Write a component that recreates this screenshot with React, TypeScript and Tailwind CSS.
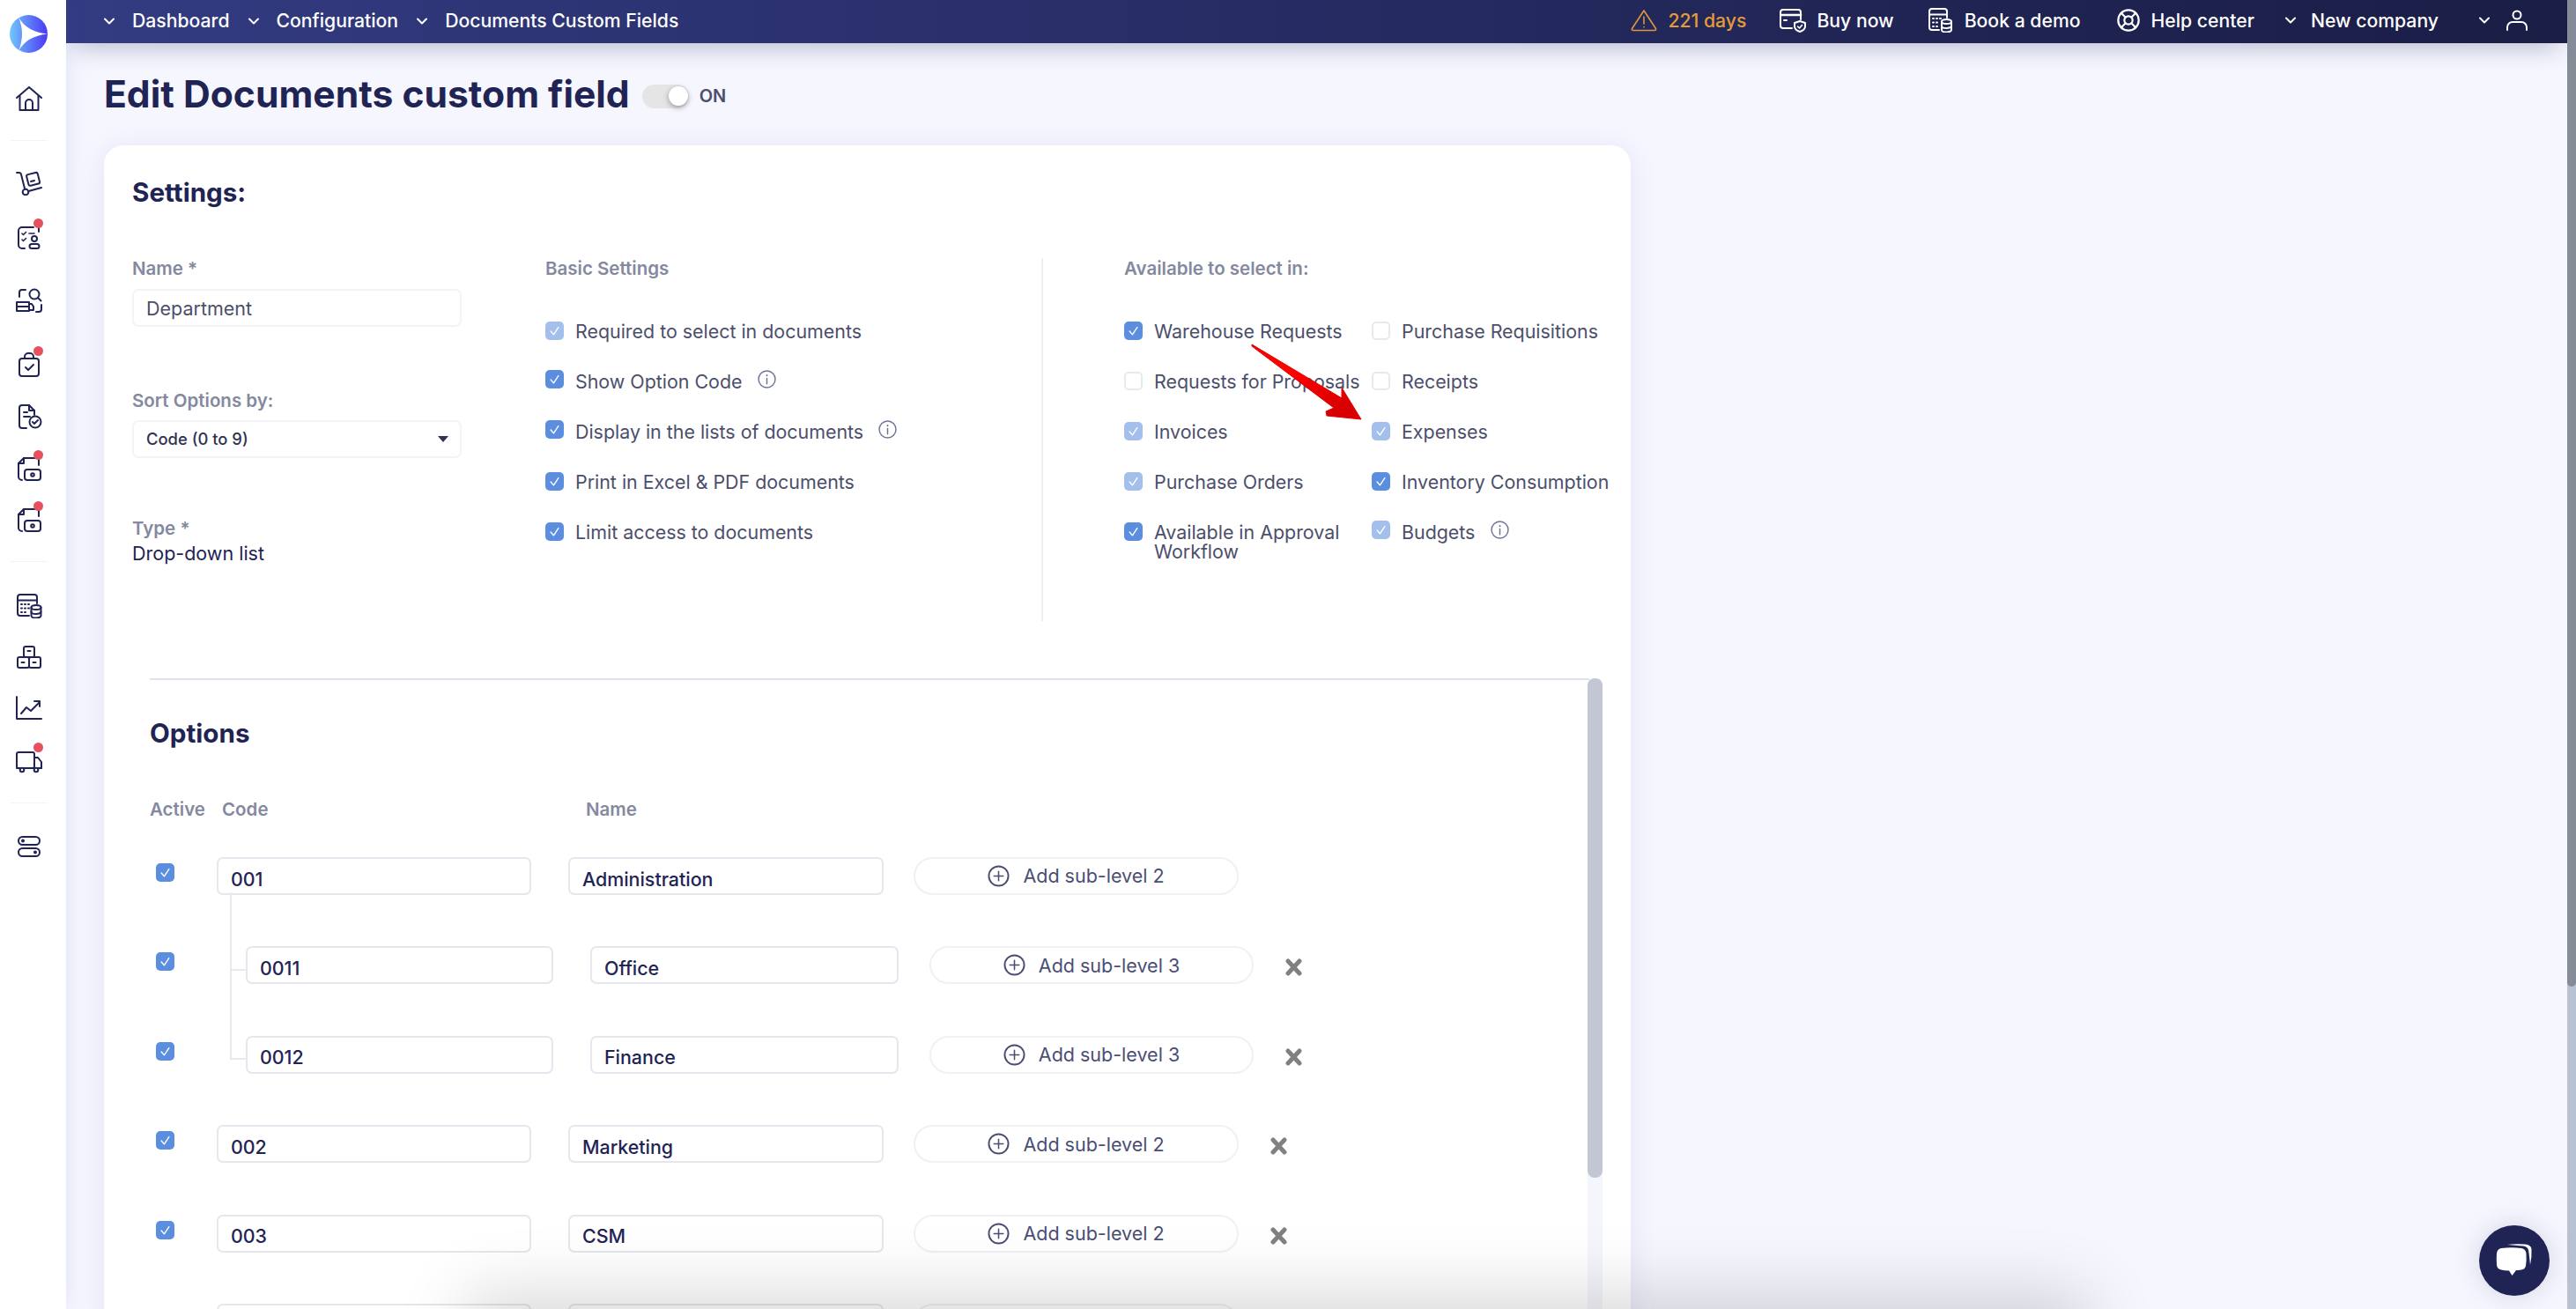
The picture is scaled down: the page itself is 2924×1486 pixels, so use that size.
import React from "react";
import { LifeBuoy } from "lucide-react";

const S = { fill: "none", stroke: "currentColor", strokeWidth: 2, strokeLinecap: "round", strokeLinejoin: "round" } as const;

function Ico({ children }: { children: React.ReactNode }) {
  return (
    <svg viewBox="0 0 30 28" className="h-[28px] w-[30px] text-[#1f2454]" {...S}>
      {children}
    </svg>
  );
}

function Slot({ mt, badge, children }: { mt: string; badge?: boolean; children: React.ReactNode }) {
  return (
    <div className={`relative h-[28px] w-[30px] shrink-0 ${mt}`}>
      {children}
      {badge && <span className="absolute -top-[7px] right-[-1px] h-[11px] w-[11px] rounded-full bg-[#e5525f]" />}
    </div>
  );
}

function SideDivider({ mt }: { mt: string }) {
  return <div className={`h-px w-[43px] shrink-0 bg-[#f3f3f7] ${mt}`} />;
}

const DocMoney = () => (
  <Ico>
    <path d="M26 2H9L3 8V23a4 4 0 0 0 4 4" />
    <path d="M9 2V8H3" />
    <path d="M26 2V10" />
    <rect x="10" y="15" width="18" height="12" rx="3" />
    <circle cx="19" cy="21" r="1.8" />
  </Ico>
);

function Sidebar() {
  return (
    <aside className="z-20 flex w-[75px] shrink-0 flex-col items-center bg-white pr-[10px] shadow-[0_0_24px_rgba(70,80,180,0.12)]">
      <svg viewBox="0 0 43 43" className="mt-[17px] h-[43px] w-[43px] shrink-0">
        <defs>
          <linearGradient id="lg" x1="0" y1="0" x2="1" y2="0">
            <stop offset="0" stopColor="#72c6fb" />
            <stop offset="1" stopColor="#4a38f5" />
          </linearGradient>
        </defs>
        <circle cx="21.5" cy="21.5" r="21.5" fill="url(#lg)" />
        <path d="M10 2.5Q19 19 43 21.5Q19 24 10 41Q18 21.5 10 2.5Z" fill="#fff" />
      </svg>
      <Slot mt="mt-[38px]">
        <Ico>
          <path d="M1 13L15 1L29 13" />
          <path d="M4.5 11V27H25.5V11" />
          <path d="M11 27V19a4 4 0 0 1 8 0V27" />
        </Ico>
      </Slot>
      <SideDivider mt="mt-[33px]" />
      <Slot mt="mt-[34px]">
        <Ico>
          <path d="M1 2H3.5Q5.5 2 6 4L10 20" />
          <circle cx="11" cy="24" r="3.3" />
          <path d="M14.5 23L29 19" />
          <rect x="13" y="3" width="13" height="13" rx="2" transform="rotate(-14 19 9)" />
          <path d="M17 12l4-1" />
        </Ico>
      </Slot>
      <Slot mt="mt-[33px]" badge>
        <Ico>
          <path d="M20 3H7a4 4 0 0 0-4 4V23a4 4 0 0 0 4 4H10" />
          <path d="M26 3V8" />
          <path d="M7 10l1.5 1.5l3-3" strokeWidth="1.6" />
          <path d="M15 10h6" strokeWidth="1.6" />
          <path d="M7 17l1.5 1.5l3-3" strokeWidth="1.6" />
          <circle cx="21" cy="16" r="3" />
          <rect x="15.5" y="22" width="11" height="5" rx="2.5" />
        </Ico>
      </Slot>
      <Slot mt="mt-[44px]">
        <Ico>
          <circle cx="21" cy="7" r="5.5" />
          <path d="M25 11l3.5 3.5" />
          <path d="M11 2H7a3 3 0 0 0-3 3v5" />
          <path d="M29 19v5a3 3 0 0 1-3 3h-3" />
          <path d="M1 16h14v10H1Z" />
          <path d="M1 21h14" />
          <path d="M15 18h3l2 3v4h-5" />
        </Ico>
      </Slot>
      <Slot mt="mt-[45px]" badge>
        <Ico>
          <rect x="4" y="7" width="22" height="20" rx="3" />
          <path d="M10 7V5a4 4 0 0 1 4-4h2a4 4 0 0 1 4 4v2" />
          <path d="M11 17l3 3l6-6" />
        </Ico>
      </Slot>
      <Slot mt="mt-[31px]">
        <Ico>
          <path d="M21 12V7l-6-6H7a3 3 0 0 0-3 3V24a3 3 0 0 0 3 3h5" />
          <path d="M15 1v6h6" />
          <path d="M9 9h4" />
          <path d="M9 14h7" />
          <circle cx="22" cy="20" r="6.5" />
          <path d="M19 20l2 2l4-4" />
        </Ico>
      </Slot>
      <Slot mt="mt-[31px]" badge>
        <DocMoney />
      </Slot>
      <Slot mt="mt-[30px]" badge>
        <DocMoney />
      </Slot>
      <SideDivider mt="mt-[33px]" />
      <Slot mt="mt-[36px]">
        <Ico>
          <path d="M15 25H5a3 3 0 0 1-3-3V4a3 3 0 0 1 3-3h16a3 3 0 0 1 3 3V11" />
          <path d="M2 7.5h22" />
          <path d="M6 12h1M10 12h1M14 12h1M6 16.5h1M10 16.5h1M14 16.5h1M6 21h1M10 21h1" />
          <ellipse cx="23" cy="15.5" rx="5.5" ry="2.5" />
          <path d="M17.5 15.5V25a5.5 2.5 0 0 0 11 0V15.5" />
          <path d="M17.5 20.5a5.5 2.5 0 0 0 11 0" />
        </Ico>
      </Slot>
      <Slot mt="mt-[30px]">
        <Ico>
          <rect x="9" y="2" width="12" height="12" rx="2" />
          <rect x="2" y="14" width="13" height="12" rx="2" />
          <rect x="15" y="14" width="13" height="12" rx="2" />
          <path d="M13.5 7h3M6.5 20h3M19.5 20h3" />
        </Ico>
      </Slot>
      <Slot mt="mt-[30px]">
        <Ico>
          <path d="M1 1V26H29" />
          <path d="M6 20L12 13L17 17L27 7" />
          <path d="M21 6H27V12" />
        </Ico>
      </Slot>
      <Slot mt="mt-[32px]" badge>
        <Ico>
          <rect x="1" y="4" width="20" height="18" rx="2" />
          <path d="M21 10h4l4 5v7h-8" />
          <path d="M1 22h28" />
          <circle cx="7" cy="24" r="2.3" fill="#fff" />
          <circle cx="23" cy="24" r="2.3" fill="#fff" />
        </Ico>
      </Slot>
      <SideDivider mt="mt-[33px]" />
      <Slot mt="mt-[35px]">
        <Ico>
          <rect x="3" y="3" width="24" height="9" rx="4.5" />
          <circle cx="8" cy="7.5" r="1" />
          <rect x="3" y="16" width="24" height="9" rx="4.5" />
          <circle cx="22" cy="20.5" r="1" />
        </Ico>
      </Slot>
    </aside>
  );
}

function Chevron({ ml }: { ml: string }) {
  return (
    <svg viewBox="0 0 12 8" className={`h-[8px] w-[12px] shrink-0 text-white ${ml}`} {...S}>
      <path d="M1 1.5L6 6.5L11 1.5" />
    </svg>
  );
}

function Header() {
  return (
    <header className="z-10 flex h-[49px] w-full shrink-0 items-center bg-gradient-to-r from-[#333b82] to-[#1a1d45] pb-[2px] text-[21.2px] font-medium text-white shadow-[0_14px_28px_-10px_rgba(30,36,90,0.3)]">
      <Chevron ml="ml-[43px]" />
      <span className="ml-[20px]">Dashboard</span>
      <Chevron ml="ml-[21px]" />
      <span className="ml-[20px]">Configuration</span>
      <Chevron ml="ml-[21px]" />
      <span className="ml-[20px]">Documents Custom Fields</span>
      <div className="ml-auto flex items-center">
        <svg viewBox="0 0 30 26" className="h-[26px] w-[30px] text-[#e0963a]" {...S} strokeWidth="1.6">
          <path d="M15 2L28.5 22.5Q29 24.5 27 24.5H3Q1 24.5 1.5 22.5Z" />
          <path d="M15 9v8" />
          <path d="M15 20.5v.3" />
        </svg>
        <span className="ml-[12px] text-[#e59a38]">221 days</span>
        <svg viewBox="0 0 30 27" className="ml-[38px] h-[27px] w-[30px]" {...S}>
          <path d="M14 22H4a3 3 0 0 1-3-3V4a3 3 0 0 1 3-3h17a3 3 0 0 1 3 3v8" />
          <path d="M1 7h23" strokeWidth="2.6" />
          <path d="M5 13h3" />
          <path d="M23 14l6 2v4q0 4-6 6q-6-2-6-6v-4Z" />
          <path d="M20.5 20l2 2l3-3.5" strokeWidth="1.6" />
        </svg>
        <span className="ml-[12px]">Buy now</span>
        <svg viewBox="0 0 28 28" className="ml-[39px] h-[28px] w-[28px]" {...S}>
          <path d="M12 25H4a3 3 0 0 1-3-3V4a3 3 0 0 1 3-3h14a3 3 0 0 1 3 3V11" />
          <path d="M1 7.5h20" />
          <path d="M5 12h1M9 12h1M13 12h1M5 16.5h1M9 16.5h1M5 21h1M9 21h1" />
          <ellipse cx="20.5" cy="15.5" rx="5.5" ry="2.5" />
          <path d="M15 15.5V25a5.5 2.5 0 0 0 11 0V15.5" />
          <path d="M15 20.5a5.5 2.5 0 0 0 11 0" />
        </svg>
        <span className="ml-[13px]">Book a demo</span>
        <LifeBuoy className="ml-[40px] h-[28px] w-[28px]" strokeWidth={1.9} />
        <span className="ml-[12px]">Help center</span>
        <Chevron ml="ml-[35px]" />
        <span className="ml-[17px]">New company</span>
        <Chevron ml="ml-[46px]" />
        <svg viewBox="0 0 24 24" className="ml-[19px] mr-[45px] h-[24px] w-[24px]" {...S}>
          <circle cx="12" cy="6" r="4.5" />
          <path d="M1 23V20a6 6 0 0 1 6-6h10a6 6 0 0 1 6 6v3" />
        </svg>
      </div>
    </header>
  );
}

type CheckState = "on" | "dim" | "off";

function Box({ state, nudge = false }: { state: CheckState; nudge?: boolean }) {
  const cls =
    state === "on"
      ? "bg-[#5b8ede]"
      : state === "dim"
        ? "bg-[#a3bfec]"
        : "border-2 border-[#e8e9f0] bg-white";
  return (
    <span className={`flex h-[21px] w-[21px] shrink-0 items-center justify-center rounded-[5px] ${cls} ${nudge ? "-mt-[2px]" : ""}`}>
      {state !== "off" && (
        <svg viewBox="0 0 12 12" className="h-[13px] w-[13px] text-white" fill="none" stroke="currentColor" strokeWidth="1.3" strokeLinecap="round" strokeLinejoin="round">
          <path d="M2 6.5L5 10L10 2.5" />
        </svg>
      )}
    </span>
  );
}

function Info({ ml }: { ml: string }) {
  return (
    <svg viewBox="0 0 20 20" className={`-mt-[2px] h-[21px] w-[21px] shrink-0 text-[#6f7598] ${ml}`} fill="none" stroke="currentColor" strokeWidth="1.4" strokeLinecap="round">
      <circle cx="10" cy="10" r="9" />
      <path d="M10 9v6" />
      <path d="M10 5.6v.3" strokeWidth="1.8" />
    </svg>
  );
}

function CheckRow({ state, label, infoMl }: { state: CheckState; label: React.ReactNode; infoMl?: string }) {
  return (
    <div className="flex h-[57px] items-start text-[21.4px] leading-[22px] text-[#4c4f6b]">
      <Box state={state} nudge={!!infoMl} />
      <span className="ml-[13px]">{label}</span>
      {infoMl && <Info ml={infoMl} />}
    </div>
  );
}

const labelCls = "h-[24px] text-[20.5px] font-semibold leading-[24px] text-[#8489a0]";

function Settings() {
  return (
    <section className="h-[605px] shrink-0 pl-[32px] pt-[36px]">
      <h2 className="h-[34px] text-[29.6px] font-bold leading-[34px] text-[#1f2454]">Settings:</h2>
      <div className="mt-[58px] flex">
        <div className="w-[374px] shrink-0">
          <div className={labelCls}>Name *</div>
          <input
            readOnly
            value="Department"
            className="mt-[11px] block h-[43px] w-full rounded-[7px] border-2 border-[#f3f3fa] bg-white pl-[14px] text-[21.5px] text-[#4c4f6b] outline-none"
          />
          <div className={`mt-[72px] ${labelCls}`}>Sort Options by:</div>
          <div className="mt-[10px] flex h-[43px] items-center justify-between rounded-[7px] border-2 border-[#f3f3fa] bg-white pl-[14px] pr-[13px] text-[18.4px] font-medium text-[#2f3250]">
            <span>Code (0 to 9)</span>
            <span className="h-0 w-0 border-x-[6.5px] border-t-[7px] border-x-transparent border-t-[#2f3250]" />
          </div>
          <div className={`mt-[68px] ${labelCls}`}>Type *</div>
          <div className="mt-[4px] h-[24px] text-[21.5px] leading-[24px] text-[#1f2454]">Drop-down list</div>
        </div>
        <div className="ml-[95px] w-[563px] shrink-0">
          <div className={labelCls}>Basic Settings</div>
          <div className="mt-[48px]">
            <CheckRow state="dim" label="Required to select in documents" />
            <CheckRow state="on" label="Show Option Code" infoMl="ml-[18px]" />
            <CheckRow state="on" label="Display in the lists of documents" infoMl="ml-[17px]" />
            <CheckRow state="on" label="Print in Excel & PDF documents" />
            <CheckRow state="on" label="Limit access to documents" />
          </div>
        </div>
        <div className="h-[412px] w-[2px] shrink-0 bg-[#eeeef4]" />
        <div className="ml-[92px]">
          <div className={labelCls}>Available to select in:</div>
          <div className="mt-[48px] grid grid-cols-[281px_auto]">
            <CheckRow state="on" label="Warehouse Requests" />
            <CheckRow state="off" label="Purchase Requisitions" />
            <CheckRow state="off" label="Requests for Proposals" />
            <CheckRow state="off" label="Receipts" />
            <CheckRow state="dim" label="Invoices" />
            <CheckRow state="dim" label="Expenses" />
            <CheckRow state="dim" label="Purchase Orders" />
            <CheckRow state="on" label="Inventory Consumption" />
            <CheckRow
              state="on"
              label={
                <>
                  Available in Approval
                  <br />
                  Workflow
                </>
              }
            />
            <CheckRow state="dim" label="Budgets" infoMl="ml-[18px]" />
          </div>
        </div>
      </div>
    </section>
  );
}

function AddButton({ label, w }: { label?: string; w: string }) {
  return (
    <button className={`flex h-[43px] shrink-0 items-center justify-center rounded-full border-2 border-[#f0f0f6] bg-white text-[21.5px] text-[#4a4e74] ${w}`}>
      {label && (
        <>
          <svg viewBox="0 0 26 26" className="h-[25px] w-[25px] shrink-0" fill="none" stroke="currentColor" strokeWidth="2" strokeLinecap="round">
            <circle cx="13" cy="13" r="11.5" />
            <path d="M13 7.5v11M7.5 13h11" strokeWidth="1.6" />
          </svg>
          <span className="ml-[15px]">{label}</span>
        </>
      )}
    </button>
  );
}

function Remove() {
  return (
    <svg viewBox="0 0 21 20" className="ml-[35px] mt-[14px] h-[20px] w-[21px] shrink-0 text-[#808080]" fill="none" stroke="currentColor" strokeWidth="5" strokeLinecap="round">
      <path d="M4 3L17 17M17 3L4 17" />
    </svg>
  );
}

function Field({ value, w, ml }: { value: string; w: string; ml: string }) {
  return (
    <input
      readOnly
      value={value}
      className={`block h-[43px] shrink-0 rounded-[7px] border-2 border-[#e5e7ee] bg-white pl-[14px] pt-[6px] text-[21.4px] font-medium text-[#1f2454] outline-none ${w} ${ml}`}
    />
  );
}

function OptionRow({ code, name, sub, level, remove = true }: { code: string; name: string; sub?: boolean; level?: string; remove?: boolean }) {
  return (
    <div className="flex h-[101.4px] items-start pl-[7px]">
      <span className="mt-[7px] shrink-0">
        <Box state="on" />
      </span>
      <Field value={code} w={sub ? "w-[349px]" : "w-[357px]"} ml={sub ? "ml-[81px]" : "ml-[48px]"} />
      <Field value={name} w={sub ? "w-[350px]" : "w-[358px]"} ml="ml-[42px]" />
      <span className={sub ? "ml-[35px]" : "ml-[34px]"}>
        <AddButton label={level} w={sub ? "w-[368px]" : "w-[369px]"} />
      </span>
      {remove && <Remove />}
    </div>
  );
}

function Options() {
  return (
    <section className="ml-[52px] mr-[32px] flex min-h-0 flex-1">
      <div className="relative min-w-0 flex-1 border-t-2 border-[#e0e1ea]">
        <h2 className="mt-[43px] h-[34px] text-[29.6px] font-bold leading-[34px] text-[#1f2454]">Options</h2>
        <div className="mt-[58px] flex h-[24px] text-[20.5px] font-semibold leading-[24px] text-[#8489a0]">
          <span className="w-[82px]">Active</span>
          <span className="w-[413px]">Code</span>
          <span>Name</span>
        </div>
        <div className="relative mt-[42px]">
          <div className="absolute left-[91px] top-[40px] h-[189px] w-[2px] bg-[#e8e9ee]" />
          <div className="absolute left-[91px] top-[127px] h-[2px] w-[18px] bg-[#e8e9ee]" />
          <div className="absolute left-[91px] top-[228px] h-[2px] w-[18px] bg-[#e8e9ee]" />
          <OptionRow code="001" name="Administration" level="Add sub-level 2" remove={false} />
          <OptionRow code="0011" name="Office" sub level="Add sub-level 3" />
          <OptionRow code="0012" name="Finance" sub level="Add sub-level 3" />
          <OptionRow code="002" name="Marketing" level="Add sub-level 2" />
          <OptionRow code="003" name="CSM" level="Add sub-level 2" />
          <OptionRow code="" name="" remove={false} />
        </div>
      </div>
      <div className="ml-[-2px] h-full w-[17px] shrink-0 rounded-t-[8px] bg-[#f5f6fb]">
        <div className="h-[567px] rounded-[8px] bg-[#c3c7d4]" />
      </div>
    </section>
  );
}

function Arrow() {
  return (
    <svg viewBox="0 0 134 95" className="absolute left-[1416px] top-[386px] z-30 h-[95px] w-[134px]">
      <defs>
        <linearGradient id="ar" x1="0" y1="0" x2="0.55" y2="1">
          <stop offset="0.45" stopColor="#ff0000" />
          <stop offset="1" stopColor="#d80000" />
        </linearGradient>
      </defs>
      <path d="M5 5L107 66L107 54L129 90L90 86L89 81L98 77L5 7Z" fill="url(#ar)" stroke="#e00000" strokeWidth="1" strokeLinejoin="round" />
    </svg>
  );
}

function Chat() {
  return (
    <div className="absolute left-[2814px] top-[1391px] z-40 flex h-[80px] w-[80px] items-center justify-center rounded-full bg-[#1f2454] shadow-[0_0_30px_rgba(30,36,84,0.15)]">
      <svg viewBox="0 0 42 42" className="h-[42px] w-[42px]">
        <path d="M13 3Q20 2 33 2.5Q40 3 40.5 8Q41 16 39 26Q38 15 37 9Q36 5 31 4.5Q22 3.5 13 3Z" fill="#fff" />
        <path d="M6 7Q18 5.500 29 7Q34 8 34.500 13Q35 21 34 27Q33 31 29 31.500Q25 32 23 32L18.500 38L15 32.500Q10 32.500 6 31.500Q1.500 30.500 1 26Q0.500 18 1 13Q1.500 8 6 7Z" fill="#fff" />
      </svg>
    </div>
  );
}

export default function App() {
  return (
    <div className="relative flex h-[1486px] w-[2924px] overflow-hidden bg-[#f5f6fe] font-['Inter','Liberation_Sans',sans-serif]">
      <Sidebar />
      <div className="flex min-w-0 flex-1 flex-col">
        <Header />
        <main className="min-h-0 flex-1 pl-[43px]">
          <div className="flex h-[116px] items-center">
            <h1 className="text-[42.6px] font-bold leading-[50px] text-[#1f2454]">Edit Documents custom field</h1>
            <div className="ml-[14px] mt-[4px] flex h-[27px] w-[53px] items-center justify-end rounded-full bg-[#e5e5e5] pr-[1px]">
              <span className="h-[22px] w-[22px] rounded-full bg-white shadow-[0_2px_6px_rgba(0,0,0,0.35)]" />
            </div>
            <span className="ml-[12px] mt-[4px] text-[20px] font-semibold text-[#4b4f6b]">ON</span>
          </div>
          <div className="flex h-[1400px] w-[1733px] flex-col rounded-[22px] bg-white shadow-[0_4px_30px_rgba(60,70,160,0.1)]">
            <Settings />
            <Options />
          </div>
        </main>
      </div>
      <div className="z-30 h-full w-[10px] shrink-0 bg-[#b8c2d3]">
        <div className="h-[1120px] rounded-b-[5px] bg-[#868b98]" />
      </div>
      <Arrow />
      <div className="absolute left-[560px] top-[1500px] z-20 h-[80px] w-[1780px] shadow-[0_0_80px_30px_rgba(0,0,0,0.16)]" />
      <Chat />
    </div>
  );
}
